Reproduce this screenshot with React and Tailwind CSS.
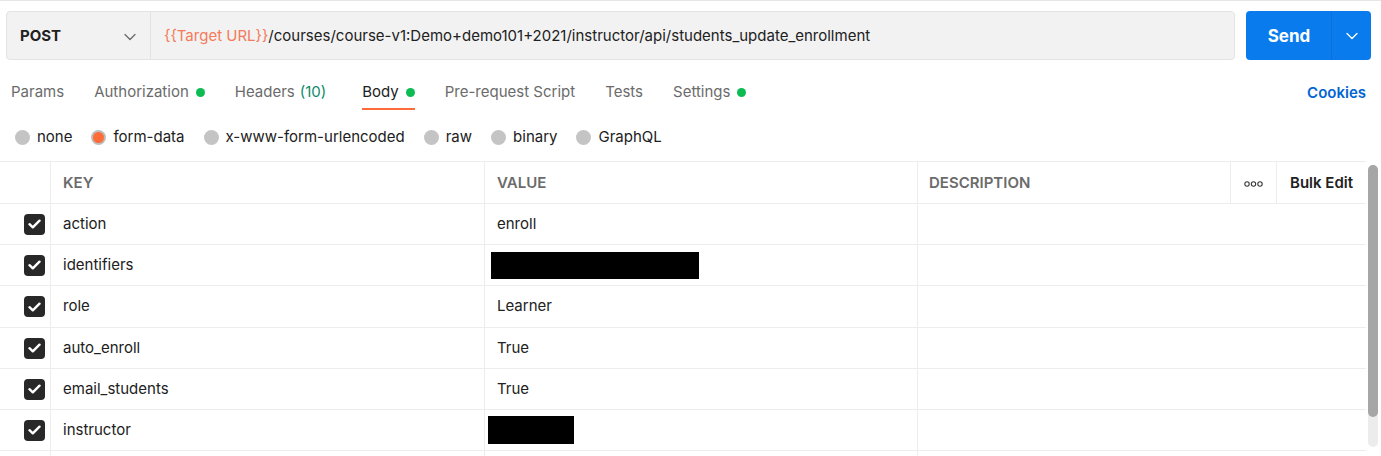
import React from "react";

const Chevron = ({ className = "", color = "#6b6b6b" }) => (
  <svg className={className} width="12" height="8" viewBox="0 0 12 8" fill="none">
    <path d="M1 1.5L6 6.5L11 1.5" stroke={color} strokeWidth="1.3" strokeLinecap="round" strokeLinejoin="round" />
  </svg>
);

const Dot = () => <span className="inline-block w-[9px] h-[9px] rounded-full bg-[#0cbb52] ml-[7px]" />;

const Check = () => (
  <div className="w-[21px] h-[21px] rounded-[4px] bg-[#282828] flex items-center justify-center">
    <svg width="13" height="10" viewBox="0 0 13 10" fill="none">
      <path d="M1.5 5.2L4.8 8.3L11.5 1.7" stroke="white" strokeWidth="2.4" strokeLinecap="round" strokeLinejoin="round" />
    </svg>
  </div>
);

const tabs = [
  { label: "Params" },
  { label: "Authorization", dot: true },
  { label: "Headers", count: "(10)" },
  { label: "Body", dot: true, active: true },
  { label: "Pre-request Script" },
  { label: "Tests" },
  { label: "Settings", dot: true },
];

const radios = [
  { label: "none" },
  { label: "form-data", active: true },
  { label: "x-www-form-urlencoded" },
  { label: "raw" },
  { label: "binary" },
  { label: "GraphQL" },
];

const rows = [
  { key: "action", value: "enroll", h: "h-[41px]" },
  { key: "identifiers", redact: "w-[208px] h-[27px]", pad: "pl-[6px]", h: "h-[41px]" },
  { key: "role", value: "Learner", h: "h-[42px]" },
  { key: "auto_enroll", value: "True", h: "h-[41px]" },
  { key: "email_students", value: "True", h: "h-[41px]" },
  { key: "instructor", redact: "w-[86px] h-[28px]", pad: "pl-[3px]", h: "h-[41px]" },
];

export default function App() {
  return (
    <div className="w-[1381px] h-[456px] overflow-hidden bg-white font-['Inter','Noto_Sans',sans-serif] text-[#212121] border-t border-[#e6e6e6]">
      {/* URL bar */}
      <div className="flex mt-[10px] pl-[6px] pr-[10px] gap-[11px] h-[49px]">
        <div className="flex-1 flex rounded-[4px] border border-[#e3e3e3] bg-[#f2f2f2]">
          <div className="w-[144px] flex items-center justify-between pl-[13px] pr-[14px] pt-[2px] border-r border-[#e3e3e3]">
            <span className="text-[15px] font-bold text-[#212121]">POST</span>
            <Chevron />
          </div>
          <div className="flex items-center pl-[13px] pt-[2px] text-[15px] text-[#212121]">
            <span className="text-[#f47a59]">{"{{Target URL}}"}</span>
            <span>/courses/course-v1:Demo+demo101+2021/instructor/api/students_update_enrollment</span>
          </div>
        </div>
        <div className="w-[125px] flex rounded-[4px] bg-[#097bed] text-white">
          <div className="w-[85px] flex items-center justify-center text-[17px] font-bold pl-[1px] pt-[2px]">Send</div>
          <div className="flex-1 flex items-center justify-center border-l border-[#0a6fd6]">
            <Chevron color="white" />
          </div>
        </div>
      </div>

      {/* Tabs */}
      <div className="flex items-stretch justify-between mt-[12px] h-[38px] pl-[11px] pr-[15px]">
        <div className="flex gap-[30px]">
          {tabs.map((t) => (
            <div
              key={t.label}
              className={`flex items-center pt-[4px] text-[15px] border-b-2 ${
                t.active ? "border-[#ff6c37] text-[#212121]" : "border-transparent text-[#6b6b6b]"
              }`}
            >
              <span>{t.label}</span>
              {t.count && <span className="ml-[5px] mr-[6px] text-[#0f8a6a]">{t.count}</span>}
              {t.dot && <Dot />}
            </div>
          ))}
        </div>
        <div className="flex items-center pt-[4px] text-[15px] font-semibold text-[#0265d2]">Cookies</div>
      </div>

      {/* Radios */}
      <div className="flex items-center h-[51px] pt-[4px] pl-[15px] gap-[19px]">
        {radios.map((r) => (
          <div key={r.label} className="flex items-center gap-[7px] text-[15px] text-[#212121]">
            {r.active ? (
              <span className="w-[15px] h-[15px] rounded-full bg-[#bdbdbd] flex items-center justify-center">
                <span className="w-[11px] h-[11px] rounded-full bg-[#ff6c37]" />
              </span>
            ) : (
              <span className="w-[15px] h-[15px] rounded-full bg-[#c4c4c4]" />
            )}
            <span>{r.label}</span>
          </div>
        ))}
      </div>

      {/* Table */}
      <div className="flex">
        <div className="w-[1366px]">
          <div className="grid grid-cols-[51px_434px_433px_313px_46px_89px] border-t border-[#ededed]">
            {/* header */}
            <div className="h-[42px] border-r border-b border-[#ededed]" />
            <div className="h-[42px] border-r border-b border-[#ededed] flex items-center pl-[12px] pt-[2px] text-[15px] font-semibold text-[#6b6b6b]">KEY</div>
            <div className="h-[42px] border-r border-b border-[#ededed] flex items-center pl-[12px] pt-[2px] text-[15px] font-semibold text-[#6b6b6b]">VALUE</div>
            <div className="h-[42px] border-r border-b border-[#ededed] flex items-center pl-[11px] pt-[2px] text-[15px] font-semibold text-[#6b6b6b]">DESCRIPTION</div>
            <div className="h-[42px] border-r border-b border-[#ededed] flex items-center justify-center pt-[2px]">
              <svg width="19" height="6" viewBox="0 0 19 6" fill="none">
                <circle cx="3" cy="3" r="2.2" stroke="#3a3a3a" strokeWidth="1.1" />
                <circle cx="9.5" cy="3" r="2.2" stroke="#3a3a3a" strokeWidth="1.1" />
                <circle cx="16" cy="3" r="2.2" stroke="#3a3a3a" strokeWidth="1.1" />
              </svg>
            </div>
            <div className="h-[42px] border-b border-[#ededed] flex items-center pl-[13px] pt-[2px] text-[15px] font-semibold text-[#212121]">Bulk Edit</div>

            {rows.map((r) => (
              <React.Fragment key={r.key}>
                <div className={`${r.h} border-r border-b border-[#ededed] flex items-center pl-[24px]`}>
                  <Check />
                </div>
                <div className={`${r.h} border-r border-b border-[#ededed] flex items-center pl-[12px] text-[15px] text-[#212121]`}>{r.key}</div>
                <div className={`${r.h} border-r border-b border-[#ededed] flex items-center text-[15px] text-[#212121] ${r.redact ? r.pad : "pl-[12px]"}`}>
                  {r.redact ? <div className={`bg-black ${r.redact}`} /> : r.value}
                </div>
                <div className={`col-span-3 ${r.h} border-b border-[#ededed]`} />
              </React.Fragment>
            ))}
            <div className="h-[10px] border-r border-[#ededed]" />
            <div className="h-[10px] border-r border-[#ededed]" />
            <div className="h-[10px] border-r border-[#ededed]" />
            <div className="col-span-3 h-[10px]" />
          </div>
        </div>
        <div className="ml-[2px] mt-[4px] w-[10px] h-[282px] rounded-full bg-[#ececec] flex flex-col">
          <div className="h-[252px] rounded-full bg-[#a6a6a6]" />
        </div>
      </div>
    </div>
  );
}
